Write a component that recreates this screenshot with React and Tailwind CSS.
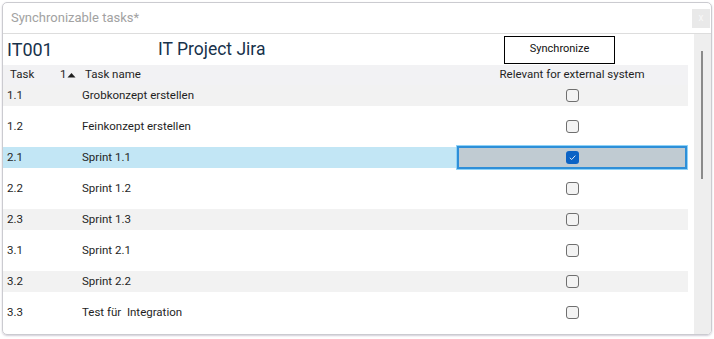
import React from 'react';

const rows = [
  { id: '1.1', name: 'Grobkonzept erstellen', shade: true },
  { id: '1.2', name: 'Feinkonzept erstellen' },
  { id: '2.1', name: 'Sprint 1.1', selected: true, checked: true },
  { id: '2.2', name: 'Sprint 1.2' },
  { id: '2.3', name: 'Sprint 1.3', shade: true },
  { id: '3.1', name: 'Sprint 2.1' },
  { id: '3.2', name: 'Sprint 2.2', shade: true },
  { id: '3.3', name: 'Test für  Integration' },
];

const Checkbox = ({ checked }) =>
  checked ? (
    <div className="w-[13px] h-[13px] rounded-[3px] bg-[#0b63c5] flex items-center justify-center">
      <svg width="9" height="9" viewBox="0 0 9 9">
        <path d="M1.8 4.8 L3.7 6.5 L7.3 2.6" fill="none" stroke="#dfeaf7" strokeWidth="1" />
      </svg>
    </div>
  ) : (
    <div className="w-[13px] h-[13px] rounded-[3px] border border-[#6f6f6f] bg-[#f3f3f3]" />
  );

const Row = ({ row }) => {
  const bg = row.selected ? 'bg-[#c2e6f5]' : row.shade ? 'bg-[#f2f2f2]' : 'bg-white';
  return (
    <div className="h-[31px]">
      <div className={`flex items-center h-[21px] w-[685px] ${bg}`}>
        <div className="w-[79px] pl-[4px] whitespace-pre">{row.id}</div>
        <div className="w-[374px] whitespace-pre">{row.name}</div>
        {row.selected ? (
          <div className="w-[232px] h-[25px] border border-[#8fd3f8] bg-[#c0cbd2]">
            <div className="h-full border-2 border-[#2e8fd8] flex items-center justify-center">
              <Checkbox checked={row.checked} />
            </div>
          </div>
        ) : (
          <div className="w-[232px] flex items-center justify-center">
            <Checkbox checked={row.checked} />
          </div>
        )}
      </div>
    </div>
  );
};

export default function App() {
  return (
    <div
      className="w-[714px] h-[339px] bg-white pt-[2px] pl-[2px] text-[11.5px] text-[#1f1f1f]"
      style={{ fontFamily: 'Roboto, "Liberation Sans", sans-serif' }}
    >
      <div className="w-[710px] h-[333px] border border-[#cbcbd0] rounded-[5px] shadow-[0_1px_2px_rgba(120,110,140,0.35)] flex flex-col overflow-hidden">
        <div className="h-[31px] shrink-0 border-b border-[#dddddd] flex items-center justify-between pl-[8px] pr-[1px]">
          <span className="text-[13px] text-[#a2a2a2]">Synchronizable tasks*</span>
          <div className="w-[18px] h-[19px] bg-[#e9e9e9] flex items-center justify-center text-[10px] text-[#f8f8f8] leading-none">
            x
          </div>
        </div>
        <div className="flex flex-1 min-h-0">
          <div className="w-[691px] flex flex-col">
            <div className="h-[31px] flex items-center shrink-0">
              <div className="w-[155px] pl-[4px] text-[18px] text-[#17324b]">IT001</div>
              <div className="w-[346px] text-[17.5px] text-[#17324b]">IT Project Jira</div>
              <div className="w-[111px] h-[28px] border border-black flex items-center justify-center text-[11px] text-[#111]">
                Synchronize
              </div>
            </div>
            <div className="h-[20px] w-[685px] bg-[#f2f2f4] flex items-center shrink-0">
              <div className="w-[57px] pl-[7px]">Task</div>
              <div className="w-[22px] flex items-center">
                1
                <svg width="9" height="6" viewBox="0 0 9 6" className="ml-[1px]">
                  <path d="M0.5 5.5 L4.5 1 L8.5 5.5 Z" fill="#1f1f1f" />
                </svg>
              </div>
              <div className="w-[374px] pl-[3px]">Task name</div>
              <div className="w-[232px] text-center">Relevant for external system</div>
            </div>
            <div className="flex flex-col">
              {rows.map((r) => (
                <Row key={r.id} row={r} />
              ))}
            </div>
          </div>
          <div className="flex-1 bg-[#eeeeee] pt-[17px]">
            <div className="ml-[7px] w-[2px] h-[128px] bg-[#8a8a8a]" />
          </div>
        </div>
      </div>
    </div>
  );
}
